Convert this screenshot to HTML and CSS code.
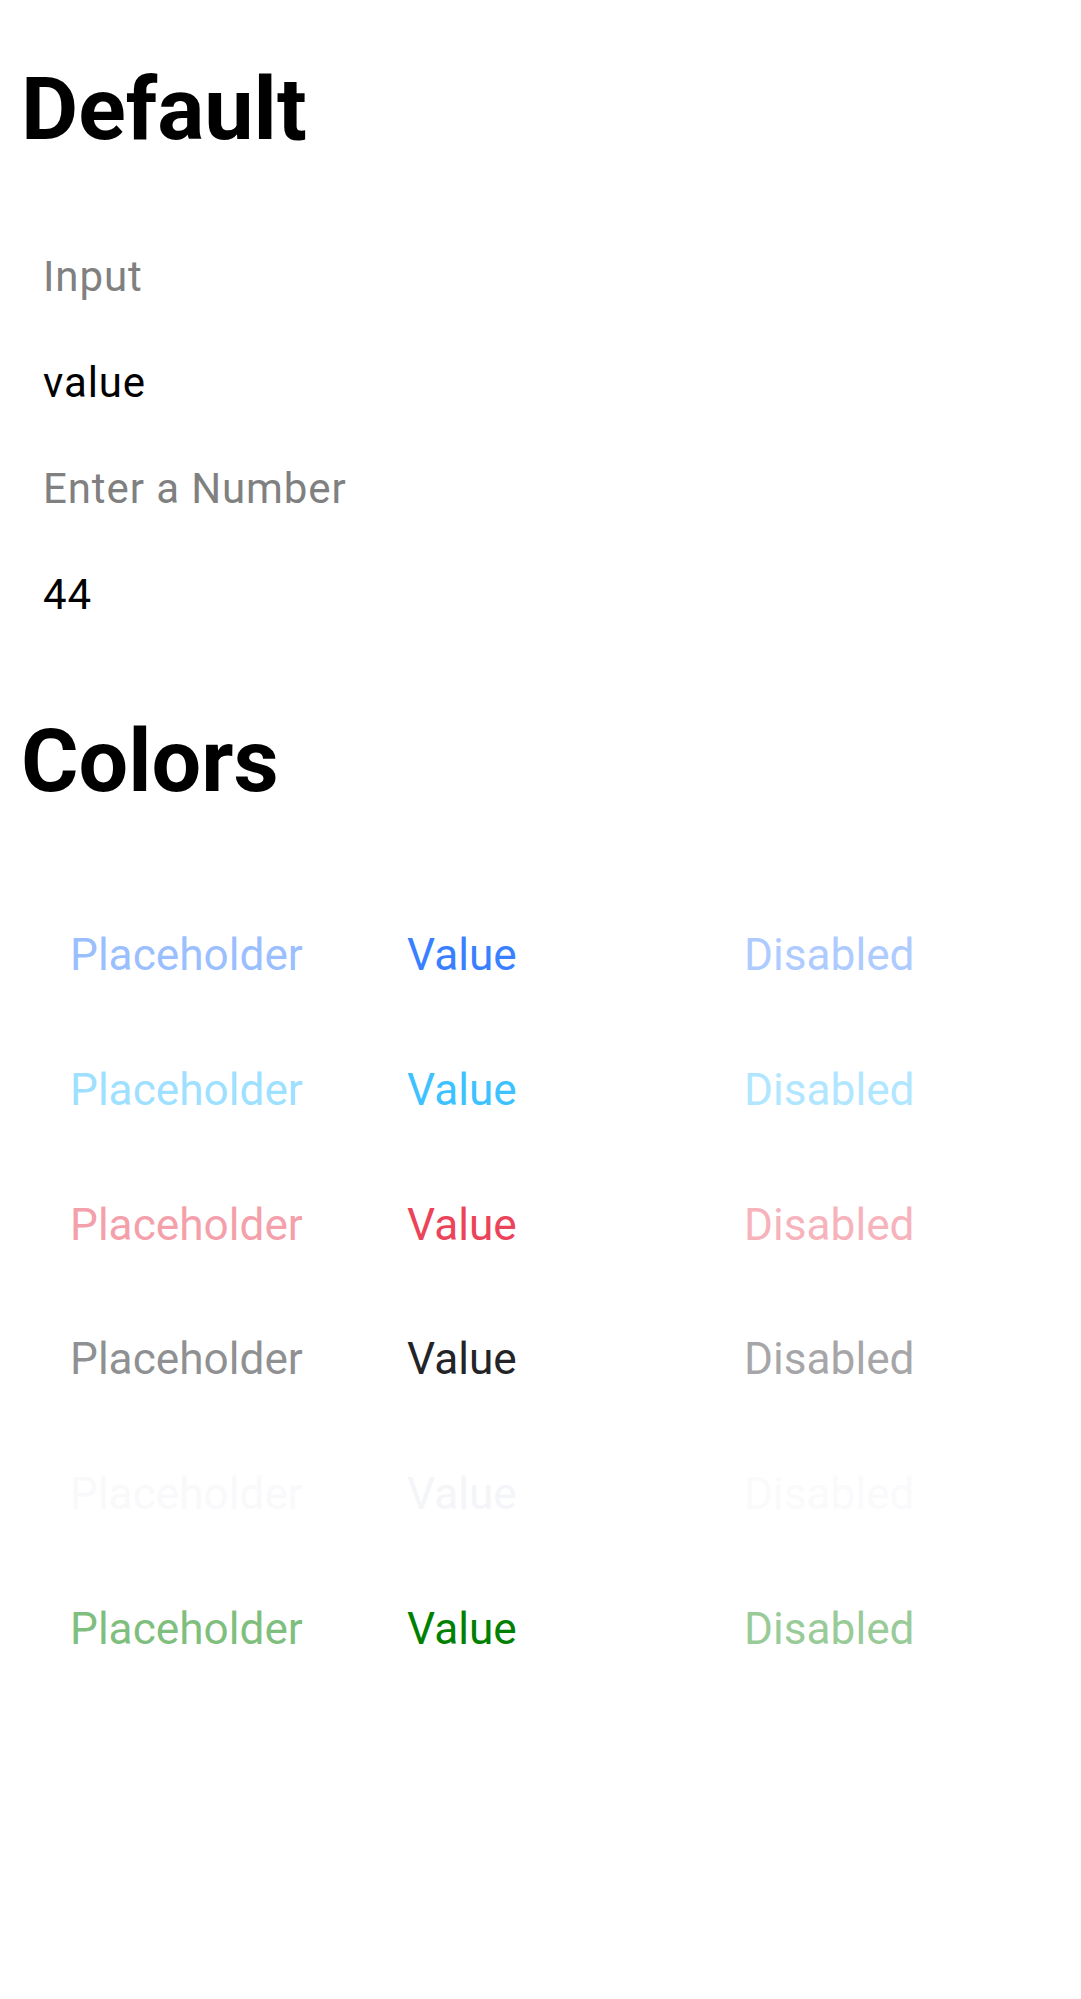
FILE: index.html
```html
<!DOCTYPE html>
<html lang="en">
<head>
<meta charset="utf-8">
<title>Input</title>
<link rel="stylesheet" href="styles.css">
</head>
<body>
<main class="page">
  <h1 class="title title-default">Default</h1>
  <section class="inputs">
    <div class="field placeholder">Input</div>
    <div class="field value">value</div>
    <div class="field placeholder">Enter a Number</div>
    <div class="field value">44</div>
  </section>
  <h1 class="title title-colors">Colors</h1>
  <section class="colors">
    <div class="crow c-primary"><span class="cell ph">Placeholder</span><span class="cell val">Value</span><span class="cell dis">Disabled</span></div>
    <div class="crow c-secondary"><span class="cell ph">Placeholder</span><span class="cell val">Value</span><span class="cell dis">Disabled</span></div>
    <div class="crow c-danger"><span class="cell ph">Placeholder</span><span class="cell val">Value</span><span class="cell dis">Disabled</span></div>
    <div class="crow c-dark"><span class="cell ph">Placeholder</span><span class="cell val">Value</span><span class="cell dis">Disabled</span></div>
    <div class="crow c-light"><span class="cell ph">Placeholder</span><span class="cell val">Value</span><span class="cell dis">Disabled</span></div>
    <div class="crow c-green"><span class="cell ph">Placeholder</span><span class="cell val">Value</span><span class="cell dis">Disabled</span></div>
  </section>
</main>
</body>
</html>
```
FILE: styles.css
```css
html, body {
  margin: 0;
  padding: 0;
  background: #ffffff;
}
body {
  font-family: Roboto, "Liberation Sans", sans-serif;
  color: #000000;
}
.page {
  padding-top: 65px;
}
.title {
  margin: 0;
  padding-left: 21px;
  font-size: 88px;
  line-height: 88px;
  font-weight: 700;
  color: #000000;
}
.title-colors {
  margin-top: 69px;
}
.inputs {
  margin-top: 71px;
}
.field {
  padding-left: 43px;
  font-size: 42px;
  letter-spacing: 0.9px;
  line-height: 106.1px;
  height: 106.1px;
}
.field.placeholder {
  color: #808080;
}
.field.value {
  color: #000000;
}
.colors {
  margin-top: 83px;
  padding: 0 35px;
}
.crow {
  display: grid;
  grid-template-columns: repeat(3, 1fr);
  font-size: 44.2px;
  line-height: 134.66px;
  height: 134.66px;
}
.cell {
  padding-left: 35px;
  white-space: nowrap;
}
.cell.ph { opacity: 0.5; }
.cell.dis { opacity: 0.4; }
.c-primary { color: #3880ff; }
.c-secondary { color: #3dc2ff; }
.c-danger { color: #eb445a; }
.c-dark { color: #222428; }
.c-light { color: #f4f5f8; }
.c-green { color: #008000; }
```
